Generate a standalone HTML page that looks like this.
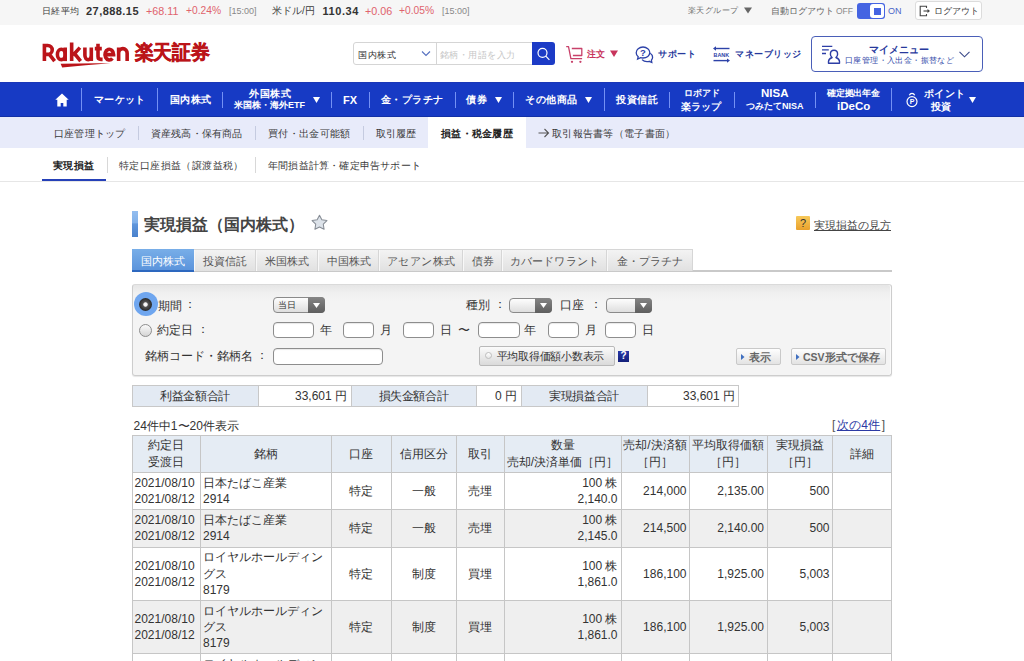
<!DOCTYPE html>
<html lang="ja">
<head>
<meta charset="utf-8">
<style>
*{box-sizing:border-box;margin:0;padding:0}
html,body{width:1024px;height:661px;overflow:hidden;background:#fff}
body{font-family:"Liberation Sans",sans-serif;color:#333;position:relative}
.a{position:absolute;white-space:nowrap;line-height:20px;height:20px}
#top{position:absolute;left:0;top:0;width:1024px;height:25px;background:#f6f6f6}
#hdr{position:absolute;left:0;top:25px;width:1024px;height:57px;background:#fff}
#nav{position:absolute;left:0;top:82px;width:1024px;height:35px;background:#173ac4;border-bottom:1px solid #1230a6;border-top:1px solid #1a37b8}
#sub{position:absolute;left:0;top:117px;width:1024px;height:31.5px;background:#e8ebfa}
#tabrow{position:absolute;left:0;top:148px;width:1024px;height:34px;background:#fff;border-bottom:1px solid #e6e6e6}
.sep{position:absolute;width:1px;background:#7491f4}
.nv{color:#fff;font-weight:bold;font-size:10px}
.sn{color:#3a3a3a;font-size:10px}
.ssep{position:absolute;width:1px;background:#c5cbe0;top:126px;height:14px}
</style>
</head>
<body>
<!-- TOP BAR -->
<div id="top">
  <div class="a" style="left:42px;top:0.5px;font-size:9px;letter-spacing:.3px;color:#3c3c3c">日経平均</div>
  <div class="a" style="left:86px;top:1px;font-size:11px;letter-spacing:.45px;font-weight:bold;color:#333">27,888.15</div>
  <div class="a" style="left:146px;top:1px;font-size:10.75px;color:#e0636d">+68.11</div>
  <div class="a" style="left:186px;top:1px;font-size:10.25px;color:#e0636d">+0.24%</div>
  <div class="a" style="left:229px;top:1px;font-size:9px;color:#888">[15:00]</div>
  <div class="a" style="left:272px;top:0.5px;font-size:10px;color:#3c3c3c">米ドル/円</div>
  <div class="a" style="left:322.5px;top:1px;font-size:11px;letter-spacing:.55px;font-weight:bold;color:#333">110.34</div>
  <div class="a" style="left:365px;top:1px;font-size:10.75px;color:#e0636d">+0.06</div>
  <div class="a" style="left:399px;top:1px;font-size:10.25px;color:#e0636d">+0.05%</div>
  <div class="a" style="left:442px;top:1px;font-size:9px;color:#888">[15:00]</div>

  <div class="a" style="left:688px;top:1px;font-size:8px;letter-spacing:.4px;color:#707070">楽天グループ</div>
  <svg style="position:absolute;left:744px;top:7px" width="8" height="7" viewBox="0 0 8 7"><path d="M0 0.5h8L4 6.5z" fill="#666"/></svg>
  <div class="a" style="left:771px;top:0.5px;font-size:9px;color:#666">自動ログアウト</div>
  <div class="a" style="left:836px;top:0.5px;font-size:8.5px;color:#888">OFF</div>
  <div style="position:absolute;left:857px;top:3px;width:28px;height:16px;background:#4564e2;border-radius:3px"></div>
  <div style="position:absolute;left:870px;top:4px;width:14px;height:14px;background:#fff;border-radius:3px"></div>
  <div style="position:absolute;left:874px;top:7.5px;width:6.5px;height:7px;background:#4564e2"></div>
  <div class="a" style="left:888px;top:0.5px;font-size:9px;color:#4a65c8">ON</div>
  <div style="position:absolute;left:915px;top:1px;width:67px;height:19px;background:#fff;border:1px solid #dcdcdc;border-radius:3px"></div>
  <svg style="position:absolute;left:919px;top:5px" width="12" height="12" viewBox="0 0 12 12"><path d="M7.5 3V1.2H1.2v9.6h6.3V9" fill="none" stroke="#444" stroke-width="1.1"/><path d="M4.5 6h5.5" stroke="#444" stroke-width="1.1"/><path d="M8.5 4l2.5 2-2.5 2z" fill="#444"/></svg>
  <div class="a" style="left:934px;top:0.5px;font-size:9px;color:#444">ログアウト</div>
</div>

<!-- HEADER -->
<div id="hdr"></div>
<svg style="position:absolute;left:0;top:0" width="220" height="75" viewBox="0 0 220 75">
<g fill="none" stroke="#bb1419" stroke-width="3.6">
<path d="M44.4 61.1V45.55H47.8A4.4 4.4 0 0 1 47.8 54.35H44.4M49.2 54.2L54.6 61.1"/>
<ellipse cx="61.3" cy="54.4" rx="3.9" ry="5.2"/>
<path d="M65.2 47.5V61.1"/>
<path d="M71.65 42.6V61.1M79.9 47.6L73 55.2M74.6 53.6L80.6 61.1"/>
<path d="M84.9 47.5V55.3A3.2 4.4 0 0 0 91.3 55.3M91.3 47.5V61.1"/>
<path d="M98 43.7V56.6Q98 59.4 101 59.4H102.6M94.8 48.6H101.8"/>
<path d="M105 54.6H113.6A4.3 5.3 0 1 0 112.4 58.3"/>
<path d="M118.65 47.5V61.1M118.65 53.2A4.25 4.6 0 0 1 127.15 53.2V61.1"/>
</g>
<path d="M60.6 63.7Q85 63.1 110.4 63.3Q85 64.9 62.2 67.6Z" fill="#bb1419"/>
<text x="134.5" y="59.2" font-family="Liberation Sans" font-weight="bold" font-size="19.5" fill="#bb1419" stroke="#bb1419" stroke-width="0.6" textLength="75" lengthAdjust="spacingAndGlyphs">楽天証券</text>
</svg>

<div style="position:absolute;left:353px;top:42px;width:84px;height:23px;border:1px solid #d5d5d5;border-radius:3px 0 0 3px;background:#fff"></div>
<div class="a" style="left:358px;top:45px;font-size:9px;letter-spacing:.5px;color:#333">国内株式</div>
<svg style="position:absolute;left:421px;top:50px" width="10" height="7" viewBox="0 0 10 7"><path d="M1 1.5l4 4 4-4" fill="none" stroke="#5570c0" stroke-width="1.1"/></svg>
<div style="position:absolute;left:436px;top:42px;width:96px;height:23px;border:1px solid #d5d5d5;border-right:none;background:#fff"></div>
<div class="a" style="left:440px;top:45px;font-size:9px;letter-spacing:.45px;color:#c6c6c6">銘柄・用語を入力</div>
<div style="position:absolute;left:532px;top:42px;width:23px;height:23px;background:#1c3bc6;border-radius:0 3px 3px 0"></div>
<svg style="position:absolute;left:535px;top:45px" width="17" height="17" viewBox="0 0 17 17"><circle cx="7.5" cy="7.8" r="4.5" fill="none" stroke="#fff" stroke-width="1.2"/><path d="M10.8 11.2l3.6 3.6" stroke="#fff" stroke-width="1.2"/></svg>

<svg style="position:absolute;left:565px;top:45px" width="19" height="19" viewBox="0 0 19 19"><path d="M1.2 1.6h2.3l2.4 12h11.2" fill="none" stroke="#c8416a" stroke-width="1.3" stroke-linejoin="round"/><path d="M6.8 3.5h10v7h-8.9" fill="none" stroke="#c8416a" stroke-width="1.3" stroke-linejoin="round"/><circle cx="7" cy="16.8" r="1.15" fill="#c8416a"/><circle cx="15.4" cy="16.8" r="1.15" fill="#c8416a"/></svg>
<div class="a" style="left:587px;top:44px;font-size:9px;font-weight:bold;color:#c8345c">注文</div>
<svg style="position:absolute;left:610px;top:50px" width="8" height="7" viewBox="0 0 8 7"><path d="M0 0.5h8L4 7z" fill="#c8345c"/></svg>

<svg style="position:absolute;left:635px;top:46px" width="19" height="18" viewBox="0 0 19 18"><path d="M8 1C4.2 1 1.2 3.6 1.2 6.7c0 1.6.8 3 2 4L2.6 13l3-1.4c.8.3 1.6.4 2.4.4 3.8 0 6.8-2.5 6.8-5.4S11.8 1 8 1z" fill="none" stroke="#2d42a8" stroke-width="1.3"/><path d="M15.2 7.2c1.5 1 2.4 2.4 2.4 4 0 1.1-.4 2.1-1.2 2.9l.4 2.4-2.6-1.2c-.7.2-1.4.3-2.2.3-2 0-3.8-.8-5-2" fill="none" stroke="#2d42a8" stroke-width="1.3"/><text x="8" y="10.2" font-size="9.5" font-weight="bold" fill="#2d42a8" text-anchor="middle" font-family="Liberation Sans">?</text></svg>
<div class="a" style="left:658px;top:43.5px;font-size:9px;letter-spacing:.6px;font-weight:bold;color:#27399c">サポート</div>

<svg style="position:absolute;left:712px;top:46px" width="19" height="17" viewBox="0 0 19 17"><path d="M17.5 2.5H3" stroke="#2d42a8" stroke-width="1.4"/><path d="M1 2.5l3-2.2v4.4z" fill="#2d42a8"/><path d="M1.5 14.6H16" stroke="#2d42a8" stroke-width="1.4"/><path d="M18 14.6l-3-2.2v4.4z" fill="#2d42a8"/><text x="9.3" y="11" font-size="5.4" font-weight="bold" fill="#2d42a8" text-anchor="middle" font-family="Liberation Sans">BANK</text></svg>
<div class="a" style="left:735px;top:43.5px;font-size:9px;letter-spacing:.5px;font-weight:bold;color:#27399c">マネーブリッジ</div>

<div style="position:absolute;left:811px;top:36px;width:172px;height:36px;border:1px solid #4a5fb8;border-radius:4px;background:#fff"></div>
<svg style="position:absolute;left:821px;top:44px" width="21" height="21" viewBox="0 0 21 21"><path d="M1 2.4h10.3M1 5.8h6.8M1 9.5h4" stroke="#2d3ea6" stroke-width="1.3"/><path d="M13 6.3C10.8 6.3 9.4 8 9.4 10.2c0 1.6.7 2.6 1.7 3.3-2.2.8-3.6 2.3-3.6 4.1v1.7h11v-1.7c0-1.8-1.4-3.3-3.6-4.1 1-.7 1.7-1.7 1.7-3.3 0-2.2-1.4-3.9-3.6-3.9z" fill="none" stroke="#2d3ea6" stroke-width="1.4" stroke-linejoin="round"/></svg>
<div class="a" style="left:869px;top:40px;font-size:10px;font-weight:bold;color:#27399c">マイメニュー</div>
<div class="a" style="left:845px;top:50.5px;font-size:8px;letter-spacing:.4px;color:#3148a8">口座管理・入出金・振替など</div>
<svg style="position:absolute;left:958px;top:50px" width="13" height="9" viewBox="0 0 13 9"><path d="M1.5 1.8l5 5 5-5" fill="none" stroke="#3b4a8a" stroke-width="1.1"/></svg>

<!-- NAV -->
<div id="nav"></div>
<svg style="position:absolute;left:55px;top:93px" width="14" height="14" viewBox="0 0 14 14"><path d="M7 0.5L0.3 6.8h2v6.7h3.4v-3.6h2.6v3.6h3.4V6.8h2z" fill="#fff"/></svg>
<div class="a nv" style="left:94px;top:90px;letter-spacing:.3px">マーケット</div>
<div class="a nv" style="left:170px;top:90px;letter-spacing:.3px">国内株式</div>
<div class="a nv" style="left:249px;top:83.5px;letter-spacing:.6px">外国株式</div>
<div class="a nv" style="left:234px;top:95px;font-size:9px">米国株・海外ETF</div>
<svg class="tri" style="position:absolute;left:313px;top:97px" width="7" height="6" viewBox="0 0 7 6"><path d="M0 0h7L3.5 6z" fill="#fff"/></svg>
<div class="a nv" style="left:343px;top:90px;font-size:11px">FX</div>
<div class="a nv" style="left:381px;top:90px;letter-spacing:.4px">金・プラチナ</div>
<div class="a nv" style="left:466px;top:90px;letter-spacing:1px">債券</div>
<svg style="position:absolute;left:495px;top:97px" width="7" height="6" viewBox="0 0 7 6"><path d="M0 0h7L3.5 6z" fill="#fff"/></svg>
<div class="a nv" style="left:525px;top:90px;letter-spacing:.6px">その他商品</div>
<svg style="position:absolute;left:585px;top:97px" width="7" height="6" viewBox="0 0 7 6"><path d="M0 0h7L3.5 6z" fill="#fff"/></svg>
<div class="a nv" style="left:616px;top:90px;letter-spacing:.5px">投資信託</div>
<div class="a nv" style="left:684px;top:83px;font-size:9px">ロボアド</div>
<div class="a nv" style="left:681px;top:96.5px">楽ラップ</div>
<div class="a nv" style="left:761px;top:83px;font-size:11.5px">NISA</div>
<div class="a nv" style="left:746px;top:95.5px;font-size:9px">つみたてNISA</div>
<div class="a nv" style="left:827px;top:83px;font-size:9px;letter-spacing:-.2px">確定拠出年金</div>
<div class="a nv" style="left:837px;top:96px;font-size:11.5px">iDeCo</div>
<svg style="position:absolute;left:905px;top:92px" width="14" height="16" viewBox="0 0 14 16"><path d="M4.3 3.2c.6-1.3 1.5-1.9 2.7-1.9s2.1.6 2.7 1.9" fill="none" stroke="#fff" stroke-width="1.2"/><circle cx="7" cy="9.6" r="5" fill="none" stroke="#fff" stroke-width="1.2"/><text x="7" y="12.2" font-size="7" font-weight="bold" fill="#fff" text-anchor="middle" font-family="Liberation Sans">P</text></svg>
<div class="a nv" style="left:924px;top:83.5px;letter-spacing:.3px">ポイント</div>
<div class="a nv" style="left:931px;top:96.5px">投資</div>
<svg style="position:absolute;left:969px;top:97px" width="7" height="6" viewBox="0 0 7 6"><path d="M0 0h7L3.5 6z" fill="#fff"/></svg>

<div class="sep" style="left:81.2px;top:87.7px;height:23.8px"></div>
<div class="sep" style="left:157.1px;top:87.7px;height:23.8px"></div>
<div class="sep" style="left:603.9px;top:87.7px;height:23.8px"></div>
<div class="sep" style="left:890.8px;top:87.7px;height:23.8px"></div>
<div class="sep" style="left:222.3px;top:91.7px;height:16px"></div>
<div class="sep" style="left:330.9px;top:91.7px;height:16px"></div>
<div class="sep" style="left:369.1px;top:91.7px;height:16px"></div>
<div class="sep" style="left:454.7px;top:91.7px;height:16px"></div>
<div class="sep" style="left:513.3px;top:91.7px;height:16px"></div>
<div class="sep" style="left:668.7px;top:91.7px;height:16px"></div>
<div class="sep" style="left:733.5px;top:91.7px;height:16px"></div>
<div class="sep" style="left:815.0px;top:91.7px;height:16px"></div>
<!-- SUB NAV -->
<div id="sub"></div>
<div class="a sn" style="left:54px;top:123.5px;letter-spacing:.2px">口座管理トップ</div>
<div class="ssep" style="left:138px"></div>
<div class="a sn" style="left:151px;top:123.5px;letter-spacing:.15px">資産残高・保有商品</div>
<div class="ssep" style="left:255px"></div>
<div class="a sn" style="left:268px;top:123.5px;letter-spacing:.35px">買付・出金可能額</div>
<div class="ssep" style="left:363px"></div>
<div class="a sn" style="left:376px;top:123.5px">取引履歴</div>
<div style="position:absolute;left:428px;top:117px;width:98px;height:31.5px;background:#fff"></div>
<div class="a sn" style="left:441px;top:123.5px;font-weight:bold;letter-spacing:.3px;color:#222">損益・税金履歴</div>
<svg style="position:absolute;left:538px;top:128px" width="12" height="10" viewBox="0 0 12 10"><path d="M0.5 5h10M6.5 1l4 4-4 4" fill="none" stroke="#555" stroke-width="1.1"/></svg>
<div class="a sn" style="left:552px;top:123.5px;letter-spacing:.3px">取引報告書等（電子書面）</div>

<!-- TAB ROW -->
<div id="tabrow"></div>
<div class="a sn" style="left:53px;top:155.5px;font-weight:bold;letter-spacing:.3px;color:#222">実現損益</div>
<div style="position:absolute;left:42px;top:179px;width:64px;height:2px;background:#2540b8"></div>
<div style="position:absolute;left:107px;top:157px;width:1px;height:16px;background:#d8d8d8"></div>
<div class="a sn" style="left:119px;top:155.5px;letter-spacing:.4px">特定口座損益（譲渡益税）</div>
<div style="position:absolute;left:255px;top:157px;width:1px;height:16px;background:#d8d8d8"></div>
<div class="a sn" style="left:268px;top:155.5px;letter-spacing:.2px">年間損益計算・確定申告サポート</div>

<!-- CONTENT -->
<div style="position:absolute;left:132px;top:211px;width:6px;height:26px;background:linear-gradient(#93bdef 0%,#7fb0ea 45%,#5f96dc 50%,#4a82cc 100%)"></div>
<div class="a" style="left:144px;top:215px;font-size:16px;color:#444;font-weight:bold">実現損益（国内株式）</div>
<svg style="position:absolute;left:311px;top:214px" width="17" height="17" viewBox="0 0 17 17"><path d="M8.50 1.20L10.85 5.76L15.92 6.59L12.30 10.24L13.08 15.31L8.50 13.00L3.92 15.31L4.70 10.24L1.08 6.59L6.15 5.76Z" fill="#dde3ea" stroke="#878d95" stroke-width="1.05" stroke-linejoin="round"/></svg>
<div style="position:absolute;left:796px;top:216px;width:14px;height:14px;background:linear-gradient(#f7c95a,#e9a12c);border-radius:1px"></div>
<div class="a" style="left:796px;width:14px;top:213px;font-size:11px;color:#333;text-align:center">?</div>
<div class="a" style="left:814px;top:215px;font-size:11px;color:#444;text-decoration:underline;text-underline-offset:1px">実現損益の見方</div>
<div style="position:absolute;left:132px;top:270px;width:760px;height:2px;background:#c9c9c9"></div>
<div style="position:absolute;left:132px;top:249px;width:62px;height:23px;background:linear-gradient(#78aee8,#5b94dc);border-bottom:2px solid #2d68bf"></div>
<div class="a" style="left:132px;width:62px;top:250.5px;font-size:11px;color:#fff;text-align:center">国内株式</div>
<div style="position:absolute;left:194px;top:249px;width:62px;height:22px;background:linear-gradient(#f3f3f3,#e1e1e1);border-top:1px solid #d6d6d6;border-right:1px solid #d6d6d6;box-shadow:inset 1px 0 0 #f8f8f8"></div>
<div class="a" style="left:194px;width:62px;top:250.5px;font-size:11px;color:#555;text-align:center">投資信託</div>
<div style="position:absolute;left:256px;top:249px;width:62px;height:22px;background:linear-gradient(#f3f3f3,#e1e1e1);border-top:1px solid #d6d6d6;border-right:1px solid #d6d6d6;box-shadow:inset 1px 0 0 #f8f8f8"></div>
<div class="a" style="left:256px;width:62px;top:250.5px;font-size:11px;color:#555;text-align:center">米国株式</div>
<div style="position:absolute;left:318px;top:249px;width:61px;height:22px;background:linear-gradient(#f3f3f3,#e1e1e1);border-top:1px solid #d6d6d6;border-right:1px solid #d6d6d6;box-shadow:inset 1px 0 0 #f8f8f8"></div>
<div class="a" style="left:318px;width:61px;top:250.5px;font-size:11px;color:#555;text-align:center">中国株式</div>
<div style="position:absolute;left:379px;top:249px;width:84px;height:22px;background:linear-gradient(#f3f3f3,#e1e1e1);border-top:1px solid #d6d6d6;border-right:1px solid #d6d6d6;box-shadow:inset 1px 0 0 #f8f8f8"></div>
<div class="a" style="left:379px;width:84px;top:250.5px;font-size:11px;color:#555;text-align:center;letter-spacing:0.5px">アセアン株式</div>
<div style="position:absolute;left:463px;top:249px;width:39px;height:22px;background:linear-gradient(#f3f3f3,#e1e1e1);border-top:1px solid #d6d6d6;border-right:1px solid #d6d6d6;box-shadow:inset 1px 0 0 #f8f8f8"></div>
<div class="a" style="left:463px;width:39px;top:250.5px;font-size:11px;color:#555;text-align:center">債券</div>
<div style="position:absolute;left:502px;top:249px;width:105px;height:22px;background:linear-gradient(#f3f3f3,#e1e1e1);border-top:1px solid #d6d6d6;border-right:1px solid #d6d6d6;box-shadow:inset 1px 0 0 #f8f8f8"></div>
<div class="a" style="left:502px;width:105px;top:250.5px;font-size:11px;color:#555;text-align:center;letter-spacing:0.2px">カバードワラント</div>
<div style="position:absolute;left:607px;top:249px;width:86px;height:22px;background:linear-gradient(#f3f3f3,#e1e1e1);border-top:1px solid #d6d6d6;border-right:1px solid #d6d6d6;box-shadow:inset 1px 0 0 #f8f8f8"></div>
<div class="a" style="left:607px;width:86px;top:250.5px;font-size:11px;color:#555;text-align:center;letter-spacing:0.1px">金・プラチナ</div>
<div style="position:absolute;left:132px;top:284px;width:760px;height:92px;background:linear-gradient(#e6e6e6 0px,#f0f0f0 8px,#f4f4f4 16px,#f4f4f4 100%);border:1px solid #cdcdcd;border-top-color:#dadada;border-radius:3px;box-shadow:inset -1px 0 0 #fafafa, 0 1px 1px #e6e6e6"></div>
<div style="position:absolute;left:133.5px;top:292px;width:24px;height:24px;background:#6fa6ef;border-radius:50%"></div>
<div style="position:absolute;left:139px;top:297.5px;width:13px;height:13px;background:radial-gradient(circle at 50% 50%,#fff 0,#eee 1.8px,#555 2.6px,#2c2c2c 6px);border-radius:50%"></div>
<div class="a" style="left:157.5px;top:295.5px;font-size:12px;color:#333">期間</div>
<div class="a" style="left:184px;top:294px;font-size:12px;color:#333">：</div>
<div style="position:absolute;left:272.5px;top:297px;width:52px;height:15.5px;border:1px solid #8a8a8a;border-radius:4px;background:linear-gradient(#fdfdfd,#dedede)"></div>
<div style="position:absolute;left:307.5px;top:297px;width:17px;height:15.5px;border-radius:0 4px 4px 0;background:linear-gradient(#858585,#5e5e5e)"></div>
<svg style="position:absolute;left:312.5px;top:302.5px" width="7" height="5" viewBox="0 0 7 5"><path d="M0 0h7L3.5 5z" fill="#fff"/></svg>
<div class="a" style="left:277.5px;top:295px;font-size:8.5px;color:#333">当日</div>
<div class="a" style="left:465.5px;top:295px;font-size:12px;color:#333">種別</div>
<div class="a" style="left:494px;top:294px;font-size:12px;color:#333">：</div>
<div style="position:absolute;left:509px;top:297.5px;width:43px;height:15.5px;border:1px solid #8a8a8a;border-radius:4px;background:linear-gradient(#fdfdfd,#dedede)"></div>
<div style="position:absolute;left:535px;top:297.5px;width:17px;height:15.5px;border-radius:0 4px 4px 0;background:linear-gradient(#858585,#5e5e5e)"></div>
<svg style="position:absolute;left:540px;top:303.0px" width="7" height="5" viewBox="0 0 7 5"><path d="M0 0h7L3.5 5z" fill="#fff"/></svg>
<div class="a" style="left:560px;top:295px;font-size:12px;color:#333">口座</div>
<div class="a" style="left:589.5px;top:294px;font-size:12px;color:#333">：</div>
<div style="position:absolute;left:605.5px;top:297.5px;width:46px;height:15.5px;border:1px solid #8a8a8a;border-radius:4px;background:linear-gradient(#fdfdfd,#dedede)"></div>
<div style="position:absolute;left:634.5px;top:297.5px;width:17px;height:15.5px;border-radius:0 4px 4px 0;background:linear-gradient(#858585,#5e5e5e)"></div>
<svg style="position:absolute;left:639.5px;top:303.0px" width="7" height="5" viewBox="0 0 7 5"><path d="M0 0h7L3.5 5z" fill="#fff"/></svg>
<div style="position:absolute;left:139px;top:323.5px;width:13px;height:13px;border:1px solid #8d8d8d;border-radius:50%;background:linear-gradient(#fafafa,#d5d5d5)"></div>
<div class="a" style="left:157px;top:319.5px;font-size:12px;color:#333">約定日</div>
<div class="a" style="left:196.5px;top:319px;font-size:12px;color:#333">：</div>
<div style="position:absolute;left:273px;top:322px;width:41px;height:16px;border:1px solid #8d8d8d;border-radius:4px;background:#fff;box-shadow:inset 0 1px 1px #e8e8e8"></div>
<div class="a" style="left:319.5px;top:320px;font-size:12px;color:#333">年</div>
<div style="position:absolute;left:342.5px;top:322px;width:31.5px;height:16px;border:1px solid #8d8d8d;border-radius:4px;background:#fff;box-shadow:inset 0 1px 1px #e8e8e8"></div>
<div class="a" style="left:379.5px;top:320px;font-size:12px;color:#333">月</div>
<div style="position:absolute;left:402.5px;top:322px;width:31px;height:16px;border:1px solid #8d8d8d;border-radius:4px;background:#fff;box-shadow:inset 0 1px 1px #e8e8e8"></div>
<div class="a" style="left:439.5px;top:320px;font-size:12px;color:#333">日</div>
<div style="position:absolute;left:478px;top:322px;width:41.5px;height:16px;border:1px solid #8d8d8d;border-radius:4px;background:#fff;box-shadow:inset 0 1px 1px #e8e8e8"></div>
<div class="a" style="left:524px;top:320px;font-size:12px;color:#333">年</div>
<div style="position:absolute;left:547.5px;top:322px;width:31.5px;height:16px;border:1px solid #8d8d8d;border-radius:4px;background:#fff;box-shadow:inset 0 1px 1px #e8e8e8"></div>
<div class="a" style="left:585px;top:320px;font-size:12px;color:#333">月</div>
<div style="position:absolute;left:605px;top:322px;width:31px;height:16px;border:1px solid #8d8d8d;border-radius:4px;background:#fff;box-shadow:inset 0 1px 1px #e8e8e8"></div>
<div class="a" style="left:642px;top:320px;font-size:12px;color:#333">日</div>
<div class="a" style="left:457.5px;top:320px;font-size:12px;color:#333">〜</div>
<div class="a" style="left:144.5px;top:345.5px;font-size:12px;color:#333">銘柄コード・銘柄名</div>
<div class="a" style="left:255.5px;top:344.5px;font-size:12px;color:#333">：</div>
<div style="position:absolute;left:273px;top:347.5px;width:109.5px;height:17px;border:1px solid #8d8d8d;border-radius:4px;background:#fff;box-shadow:inset 0 1px 1px #e8e8e8"></div>
<div style="position:absolute;left:479px;top:345.5px;width:136px;height:20px;border:1px solid #b9b9b9;border-radius:2px;background:linear-gradient(#fbfbfb,#dadada)"></div>
<div style="position:absolute;left:484.5px;top:352px;width:7px;height:7px;border:1px solid #bdbdbd;border-radius:50%;background:linear-gradient(#fff,#e6e6e6)"></div>
<div class="a" style="left:496.5px;top:345.5px;font-size:11px;color:#333;letter-spacing:-0.25px">平均取得価額小数表示</div>
<div style="position:absolute;left:618px;top:350.5px;width:11px;height:11px;background:linear-gradient(#2838a8,#14207a)"></div>
<div class="a" style="left:618px;width:11px;top:346px;font-size:10px;color:#fff;text-align:center;font-weight:bold">?</div>
<div style="position:absolute;left:736px;top:348px;width:45px;height:17px;border:1px solid #c9c9c9;border-radius:2px;background:linear-gradient(#fefefe,#e3e3e3)"></div>
<svg style="position:absolute;left:740.5px;top:354px" width="4" height="6" viewBox="0 0 4 6"><path d="M0 0l3.5 3L0 6z" fill="#3f6fc0"/></svg>
<div class="a" style="left:749px;top:346.5px;font-size:10.5px;color:#666;font-weight:bold">表示</div>
<div style="position:absolute;left:791px;top:348px;width:95px;height:17px;border:1px solid #c9c9c9;border-radius:2px;background:linear-gradient(#fefefe,#e3e3e3)"></div>
<svg style="position:absolute;left:795.5px;top:354px" width="4" height="6" viewBox="0 0 4 6"><path d="M0 0l3.5 3L0 6z" fill="#3f6fc0"/></svg>
<div class="a" style="left:803px;top:346.5px;font-size:10.5px;color:#666;font-weight:bold">CSV形式で保存</div>
<div style="position:absolute;left:132px;top:385px;width:607px;height:22px;border:1px solid #c8c8c8;background:#fff"></div>
<div style="position:absolute;left:133px;top:386px;width:125px;height:20px;background:#e3eaf3"></div>
<div class="a" style="left:132px;width:126px;top:386px;font-size:12px;color:#333;text-align:center;letter-spacing:-0.35px">利益金額合計</div>
<div class="a" style="left:258px;width:89px;top:386px;font-size:12px;color:#333;text-align:right">33,601 円</div>
<div style="position:absolute;left:258px;top:385px;width:1px;height:22px;background:#c8c8c8"></div>
<div style="position:absolute;left:351px;top:386px;width:125px;height:20px;background:#e3eaf3"></div>
<div class="a" style="left:351px;width:125px;top:386px;font-size:12px;color:#333;text-align:center;letter-spacing:-0.35px">損失金額合計</div>
<div style="position:absolute;left:351px;top:385px;width:1px;height:22px;background:#c8c8c8"></div>
<div class="a" style="left:476px;width:41px;top:386px;font-size:12px;color:#333;text-align:right">0 円</div>
<div style="position:absolute;left:476px;top:385px;width:1px;height:22px;background:#c8c8c8"></div>
<div style="position:absolute;left:521px;top:386px;width:126px;height:20px;background:#e3eaf3"></div>
<div class="a" style="left:521px;width:126px;top:386px;font-size:12px;color:#333;text-align:center;letter-spacing:-0.35px">実現損益合計</div>
<div style="position:absolute;left:521px;top:385px;width:1px;height:22px;background:#c8c8c8"></div>
<div class="a" style="left:647px;width:88px;top:386px;font-size:12px;color:#333;text-align:right">33,601 円</div>
<div style="position:absolute;left:647px;top:385px;width:1px;height:22px;background:#c8c8c8"></div>
<div class="a" style="left:133.5px;top:415.5px;font-size:12px;color:#333">24件中1〜20件表示</div>
<div class="a" style="left:832px;top:415px;font-size:12px;color:#333"><span style="color:#555">[</span><span style="color:#2c3aa4;text-decoration:underline;margin:0 1.5px 0 1.5px;letter-spacing:.2px">次の4件</span><span style="color:#555">]</span></div>
<div style="position:absolute;left:132px;top:434.5px;width:759px;height:37px;background:#e5ecf4"></div>
<div style="position:absolute;left:132px;top:471.5px;width:759px;height:37.5px;background:#fff"></div>
<div style="position:absolute;left:132px;top:509px;width:759px;height:37.5px;background:#efefef"></div>
<div style="position:absolute;left:132px;top:546.5px;width:759px;height:53.5px;background:#fff"></div>
<div style="position:absolute;left:132px;top:600px;width:759px;height:53px;background:#efefef"></div>
<div style="position:absolute;left:132px;top:653px;width:759px;height:53px;background:#fff"></div>
<div style="position:absolute;left:132px;top:434.5px;width:1px;height:300px;background:#c6c6c6"></div>
<div style="position:absolute;left:200px;top:434.5px;width:1px;height:300px;background:#c6c6c6"></div>
<div style="position:absolute;left:331px;top:434.5px;width:1px;height:300px;background:#c6c6c6"></div>
<div style="position:absolute;left:391px;top:434.5px;width:1px;height:300px;background:#c6c6c6"></div>
<div style="position:absolute;left:456px;top:434.5px;width:1px;height:300px;background:#c6c6c6"></div>
<div style="position:absolute;left:504px;top:434.5px;width:1px;height:300px;background:#c6c6c6"></div>
<div style="position:absolute;left:621px;top:434.5px;width:1px;height:300px;background:#c6c6c6"></div>
<div style="position:absolute;left:689px;top:434.5px;width:1px;height:300px;background:#c6c6c6"></div>
<div style="position:absolute;left:767px;top:434.5px;width:1px;height:300px;background:#c6c6c6"></div>
<div style="position:absolute;left:832px;top:434.5px;width:1px;height:300px;background:#c6c6c6"></div>
<div style="position:absolute;left:891px;top:434.5px;width:1px;height:300px;background:#c6c6c6"></div>
<div style="position:absolute;left:132px;top:434.5px;width:760px;height:1px;background:#c6c6c6"></div>
<div style="position:absolute;left:132px;top:471.5px;width:760px;height:1px;background:#c6c6c6"></div>
<div style="position:absolute;left:132px;top:509px;width:760px;height:1px;background:#c6c6c6"></div>
<div style="position:absolute;left:132px;top:546.5px;width:760px;height:1px;background:#c6c6c6"></div>
<div style="position:absolute;left:132px;top:600px;width:760px;height:1px;background:#c6c6c6"></div>
<div style="position:absolute;left:132px;top:653px;width:760px;height:1px;background:#c6c6c6"></div>
<div class="a" style="left:132px;width:68px;top:435.35px;font-size:12px;color:#333;text-align:center">約定日</div>
<div class="a" style="left:132px;width:68px;top:451.65px;font-size:12px;color:#333;text-align:center">受渡日</div>
<div class="a" style="left:200px;width:131px;top:443.5px;font-size:12px;color:#333;text-align:center">銘柄</div>
<div class="a" style="left:331px;width:60px;top:443.5px;font-size:12px;color:#333;text-align:center">口座</div>
<div class="a" style="left:391px;width:65px;top:443.5px;font-size:12px;color:#333;text-align:center">信用区分</div>
<div class="a" style="left:456px;width:48px;top:443.5px;font-size:12px;color:#333;text-align:center">取引</div>
<div class="a" style="left:504px;width:117px;top:435.35px;font-size:12px;color:#333;text-align:center">数量</div>
<div class="a" style="left:504px;width:117px;top:451.65px;font-size:12px;color:#333;text-align:center">売却/決済単価［円］</div>
<div class="a" style="left:621px;width:68px;top:435.35px;font-size:12px;color:#333;text-align:center">売却/決済額</div>
<div class="a" style="left:621px;width:68px;top:451.65px;font-size:12px;color:#333;text-align:center">［円］</div>
<div class="a" style="left:689px;width:78px;top:435.35px;font-size:12px;color:#333;text-align:center">平均取得価額</div>
<div class="a" style="left:689px;width:78px;top:451.65px;font-size:12px;color:#333;text-align:center">［円］</div>
<div class="a" style="left:767px;width:65px;top:435.35px;font-size:12px;color:#333;text-align:center">実現損益</div>
<div class="a" style="left:767px;width:65px;top:451.65px;font-size:12px;color:#333;text-align:center">［円］</div>
<div class="a" style="left:832px;width:59px;top:443.5px;font-size:12px;color:#333;text-align:center">詳細</div>
<div class="a" style="left:134.5px;top:472.6px;font-size:12px;color:#333">2021/08/10</div>
<div class="a" style="left:134.5px;top:488.9px;font-size:12px;color:#333">2021/08/12</div>
<div class="a" style="left:203px;top:472.6px;font-size:12px;color:#333">日本たばこ産業</div>
<div class="a" style="left:203px;top:488.9px;font-size:12px;color:#333">2914</div>
<div class="a" style="left:331px;width:60px;top:480.75px;font-size:12px;color:#333;text-align:center">特定</div>
<div class="a" style="left:391px;width:65px;top:480.75px;font-size:12px;color:#333;text-align:center">一般</div>
<div class="a" style="left:456px;width:48px;top:480.75px;font-size:12px;color:#333;text-align:center">売埋</div>
<div class="a" style="left:504px;width:113.5px;top:472.6px;font-size:12px;color:#333;text-align:right">100 株</div>
<div class="a" style="left:504px;width:113.5px;top:488.9px;font-size:12px;color:#333;text-align:right">2,140.0</div>
<div class="a" style="left:621px;width:65.5px;top:480.75px;font-size:12px;color:#333;text-align:right">214,000</div>
<div class="a" style="left:689px;width:75px;top:480.75px;font-size:12px;color:#333;text-align:right">2,135.00</div>
<div class="a" style="left:767px;width:62.5px;top:480.75px;font-size:12px;color:#333;text-align:right">500</div>
<div class="a" style="left:134.5px;top:510.1px;font-size:12px;color:#333">2021/08/10</div>
<div class="a" style="left:134.5px;top:526.4px;font-size:12px;color:#333">2021/08/12</div>
<div class="a" style="left:203px;top:510.1px;font-size:12px;color:#333">日本たばこ産業</div>
<div class="a" style="left:203px;top:526.4px;font-size:12px;color:#333">2914</div>
<div class="a" style="left:331px;width:60px;top:518.25px;font-size:12px;color:#333;text-align:center">特定</div>
<div class="a" style="left:391px;width:65px;top:518.25px;font-size:12px;color:#333;text-align:center">一般</div>
<div class="a" style="left:456px;width:48px;top:518.25px;font-size:12px;color:#333;text-align:center">売埋</div>
<div class="a" style="left:504px;width:113.5px;top:510.1px;font-size:12px;color:#333;text-align:right">100 株</div>
<div class="a" style="left:504px;width:113.5px;top:526.4px;font-size:12px;color:#333;text-align:right">2,145.0</div>
<div class="a" style="left:621px;width:65.5px;top:518.25px;font-size:12px;color:#333;text-align:right">214,500</div>
<div class="a" style="left:689px;width:75px;top:518.25px;font-size:12px;color:#333;text-align:right">2,140.00</div>
<div class="a" style="left:767px;width:62.5px;top:518.25px;font-size:12px;color:#333;text-align:right">500</div>
<div class="a" style="left:134.5px;top:555.6px;font-size:12px;color:#333">2021/08/10</div>
<div class="a" style="left:134.5px;top:571.9px;font-size:12px;color:#333">2021/08/12</div>
<div class="a" style="left:203px;top:547.45px;font-size:12px;color:#333">ロイヤルホールディン</div>
<div class="a" style="left:203px;top:563.75px;font-size:12px;color:#333">グス</div>
<div class="a" style="left:203px;top:580.05px;font-size:12px;color:#333">8179</div>
<div class="a" style="left:331px;width:60px;top:563.75px;font-size:12px;color:#333;text-align:center">特定</div>
<div class="a" style="left:391px;width:65px;top:563.75px;font-size:12px;color:#333;text-align:center">制度</div>
<div class="a" style="left:456px;width:48px;top:563.75px;font-size:12px;color:#333;text-align:center">買埋</div>
<div class="a" style="left:504px;width:113.5px;top:555.6px;font-size:12px;color:#333;text-align:right">100 株</div>
<div class="a" style="left:504px;width:113.5px;top:571.9px;font-size:12px;color:#333;text-align:right">1,861.0</div>
<div class="a" style="left:621px;width:65.5px;top:563.75px;font-size:12px;color:#333;text-align:right">186,100</div>
<div class="a" style="left:689px;width:75px;top:563.75px;font-size:12px;color:#333;text-align:right">1,925.00</div>
<div class="a" style="left:767px;width:62.5px;top:563.75px;font-size:12px;color:#333;text-align:right">5,003</div>
<div class="a" style="left:134.5px;top:608.85px;font-size:12px;color:#333">2021/08/10</div>
<div class="a" style="left:134.5px;top:625.15px;font-size:12px;color:#333">2021/08/12</div>
<div class="a" style="left:203px;top:600.7px;font-size:12px;color:#333">ロイヤルホールディン</div>
<div class="a" style="left:203px;top:617.0px;font-size:12px;color:#333">グス</div>
<div class="a" style="left:203px;top:633.3px;font-size:12px;color:#333">8179</div>
<div class="a" style="left:331px;width:60px;top:617.0px;font-size:12px;color:#333;text-align:center">特定</div>
<div class="a" style="left:391px;width:65px;top:617.0px;font-size:12px;color:#333;text-align:center">制度</div>
<div class="a" style="left:456px;width:48px;top:617.0px;font-size:12px;color:#333;text-align:center">買埋</div>
<div class="a" style="left:504px;width:113.5px;top:608.85px;font-size:12px;color:#333;text-align:right">100 株</div>
<div class="a" style="left:504px;width:113.5px;top:625.15px;font-size:12px;color:#333;text-align:right">1,861.0</div>
<div class="a" style="left:621px;width:65.5px;top:617.0px;font-size:12px;color:#333;text-align:right">186,100</div>
<div class="a" style="left:689px;width:75px;top:617.0px;font-size:12px;color:#333;text-align:right">1,925.00</div>
<div class="a" style="left:767px;width:62.5px;top:617.0px;font-size:12px;color:#333;text-align:right">5,003</div>
<div class="a" style="left:134.5px;top:661.85px;font-size:12px;color:#333">2021/08/10</div>
<div class="a" style="left:134.5px;top:678.15px;font-size:12px;color:#333">2021/08/12</div>
<div class="a" style="left:203px;top:653.7px;font-size:12px;color:#333">ロイヤルホールディン</div>
<div class="a" style="left:203px;top:670.0px;font-size:12px;color:#333">グス</div>
<div class="a" style="left:203px;top:686.3px;font-size:12px;color:#333">8179</div>
<div class="a" style="left:331px;width:60px;top:670.0px;font-size:12px;color:#333;text-align:center">特定</div>
<div class="a" style="left:391px;width:65px;top:670.0px;font-size:12px;color:#333;text-align:center">制度</div>
<div class="a" style="left:456px;width:48px;top:670.0px;font-size:12px;color:#333;text-align:center">買埋</div>
<div class="a" style="left:504px;width:113.5px;top:661.85px;font-size:12px;color:#333;text-align:right">100 株</div>
<div class="a" style="left:504px;width:113.5px;top:678.15px;font-size:12px;color:#333;text-align:right">1,861.0</div>
<div class="a" style="left:621px;width:65.5px;top:670.0px;font-size:12px;color:#333;text-align:right">186,100</div>
<div class="a" style="left:689px;width:75px;top:670.0px;font-size:12px;color:#333;text-align:right">1,925.00</div>
<div class="a" style="left:767px;width:62.5px;top:670.0px;font-size:12px;color:#333;text-align:right">5,003</div>
</body>
</html>
